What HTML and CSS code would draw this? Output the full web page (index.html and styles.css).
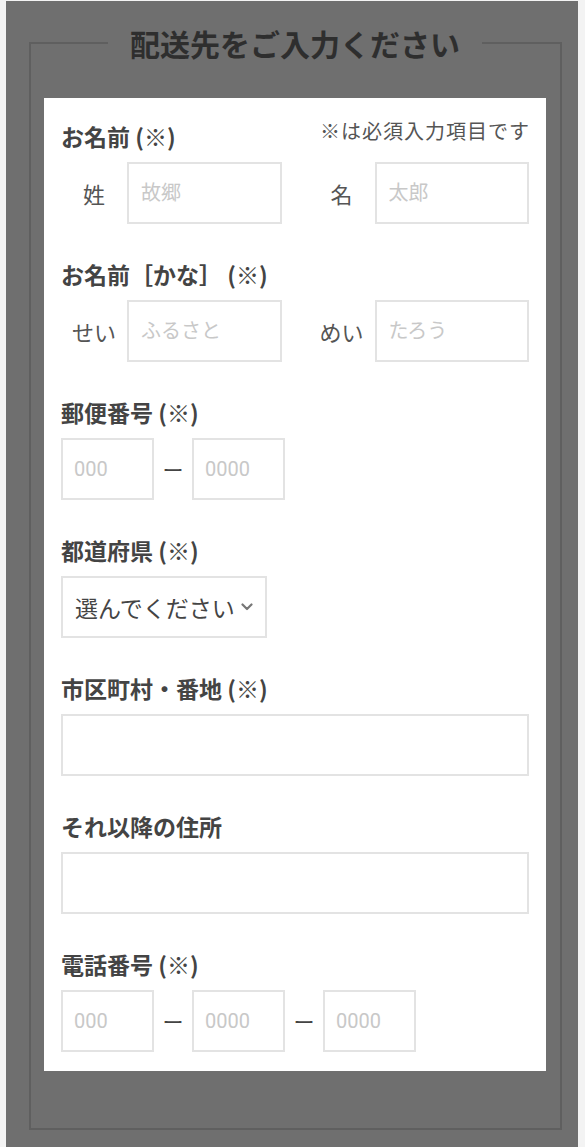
FILE: index.html
```html
<!DOCTYPE html>
<html lang="ja">
<head>
    <meta charset="UTF-8">
    <meta name="viewport" content="width=device-width, initial-scale=1.0">
    <title>配送先入力</title>
    <link rel="stylesheet" href="styles.css">
</head>
<body>
    <div class="screen">
        <fieldset class="delivery">
            <legend class="delivery-title">配送先をご入力ください</legend>
            <form class="form-panel">
                <!-- name -->
                <div class="field">
                    <div class="field-head">
                        <label class="field-label">お名前 (※)</label>
                        <span class="required-note">※は必須入力項目です</span>
                    </div>
                    <div class="name-grid">
                        <div class="name-part">
                            <span class="sub-label">姓</span>
                            <input class="text-input" type="text" placeholder="故郷">
                        </div>
                        <div class="name-part">
                            <span class="sub-label">名</span>
                            <input class="text-input" type="text" placeholder="太郎">
                        </div>
                    </div>
                </div>

                <!-- name kana -->
                <div class="field">
                    <div class="field-head">
                        <label class="field-label">お名前［かな］ (※)</label>
                    </div>
                    <div class="name-grid">
                        <div class="name-part">
                            <span class="sub-label">せい</span>
                            <input class="text-input" type="text" placeholder="ふるさと">
                        </div>
                        <div class="name-part">
                            <span class="sub-label">めい</span>
                            <input class="text-input" type="text" placeholder="たろう">
                        </div>
                    </div>
                </div>

                <!-- postal code -->
                <div class="field">
                    <div class="field-head">
                        <label class="field-label">郵便番号 (※)</label>
                    </div>
                    <div class="split-row">
                        <input class="text-input short" type="text" placeholder="000">
                        <span class="dash">ー</span>
                        <input class="text-input short" type="text" placeholder="0000">
                    </div>
                </div>

                <!-- prefecture -->
                <div class="field">
                    <div class="field-head">
                        <label class="field-label">都道府県 (※)</label>
                    </div>
                    <div class="select-wrap">
                        <select class="select-input">
                            <option>選んでください</option>
                        </select>
                        <svg class="select-arrow" width="12" height="8" viewBox="0 0 12 8">
                            <path d="M1.5 1.5 L6 6 L10.5 1.5" fill="none" stroke="#777" stroke-width="2.2" stroke-linecap="round" stroke-linejoin="round"/>
                        </svg>
                    </div>
                </div>

                <!-- address -->
                <div class="field">
                    <div class="field-head">
                        <label class="field-label">市区町村・番地 (※)</label>
                    </div>
                    <input class="text-input wide" type="text">
                </div>

                <div class="field">
                    <div class="field-head">
                        <label class="field-label">それ以降の住所</label>
                    </div>
                    <input class="text-input wide" type="text">
                </div>

                <!-- phone -->
                <div class="field">
                    <div class="field-head">
                        <label class="field-label">電話番号 (※)</label>
                    </div>
                    <div class="split-row">
                        <input class="text-input short" type="text" placeholder="000">
                        <span class="dash">ー</span>
                        <input class="text-input short" type="text" placeholder="0000">
                        <span class="dash">ー</span>
                        <input class="text-input short" type="text" placeholder="0000">
                    </div>
                </div>
            </form>
        </fieldset>
    </div>
</body>
</html>
```

FILE: styles.css
```css
html,
body {
    height: 100%;
}

body {
    margin: 0;
    background-color: #f3f3f3;
    font-family: "Noto Sans CJK JP", sans-serif;
    display: flex;
    flex-direction: column;
    overflow: hidden; /* only the top of the page is shown */
}

.screen {
    flex: 1;
    margin: 1px 7px 0 6px;
    padding: 22px 16px 0 23px;
    background-color: #6f6f6f;
}

/* frame with the title on its top line */
.delivery {
    margin: 0;
    min-width: 0;
    border: 2px solid #5f5f5f;
    padding: 35px 14px 57px 13px;
}

.delivery-title {
    margin: 0 auto;
    padding: 0 22px;
    font-size: 30px;
    line-height: 40px;
    font-weight: 700;
    color: #2e2e2e;
}

.form-panel {
    background-color: #fff;
    padding: 23px 17px 19px;
}

.field + .field {
    margin-top: 35px;
}

.field-head {
    display: flex;
    justify-content: space-between;
    align-items: flex-start;
    margin-bottom: 11px;
}

.field-label {
    font-size: 23px;
    line-height: 30px;
    font-weight: 700;
    color: #444;
}

.required-note {
    font-size: 20px;
    line-height: 20px;
    letter-spacing: 1px;
    margin-right: -1px;
    color: #555;
}

/* inputs */
.text-input {
    box-sizing: border-box;
    height: 62px;
    min-width: 0;
    margin: 0;
    padding: 0 11px;
    border: 2px solid #e3e3e3;
    border-radius: 0;
    background: #fff;
    font-family: Roboto, "Noto Sans CJK JP", sans-serif;
    font-size: 20px;
    color: #444;
    outline: none;
}

.text-input::placeholder {
    color: #c8c8c8;
}

.text-input.wide {
    display: block;
    width: 100%;
}

.text-input.short {
    width: 93px;
}

.name-grid {
    display: grid;
    grid-template-columns: minmax(0, 1fr) minmax(0, 1fr);
    column-gap: 27px;
}

.name-part {
    display: flex;
    align-items: center;
    min-width: 0;
}

.name-part .text-input {
    flex: 1;
    width: 0;
    padding-left: 12px;
}

.sub-label {
    width: 66px;
    flex-shrink: 0;
    text-align: center;
    font-size: 22px;
    color: #555;
}

.split-row {
    display: flex;
    align-items: center;
}

.dash {
    width: 38px;
    text-align: center;
    font-size: 21px;
    color: #444;
}

/* prefecture select */
.select-wrap {
    position: relative;
    width: 206px;
}

.select-input {
    box-sizing: border-box;
    display: block;
    width: 100%;
    height: 62px;
    padding: 0 0 0 12px;
    border: 2px solid #e3e3e3;
    border-radius: 0;
    background: #fff;
    font-family: "Noto Sans CJK JP", sans-serif;
    font-size: 23px;
    color: #444;
    appearance: none;
    -webkit-appearance: none;
    outline: none;
}

.select-arrow {
    position: absolute;
    right: 14px;
    top: 27px;
}
```
